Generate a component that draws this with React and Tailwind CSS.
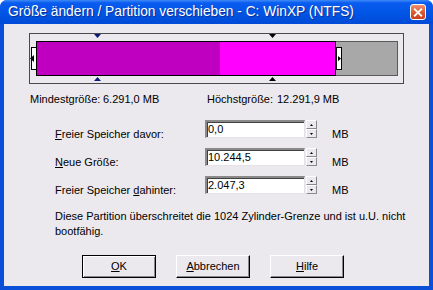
import React from "react";

function Tri({ dir, color, className }) {
  const pts = {
    down: "0,0 7,0 3.5,4",
    up: "0,4 7,4 3.5,0",
  };
  return (
    <svg width="7" height="4" viewBox="0 0 7 4" className={className}>
      <polygon points={pts[dir]} fill={color} />
    </svg>
  );
}

function Handle({ side, className }) {
  return (
    <div className={"absolute top-[13px] flex h-[23px] w-[6px] items-center border border-black bg-white " + className}>
      <svg width="4" height="7" viewBox="0 0 4 7" className={side === "left" ? "-ml-[2px]" : "ml-[1px]"}>
        {side === "left" ? <polygon points="4,0 4,7 0,3.5" fill="#000" /> : <polygon points="0,0 0,7 4,3.5" fill="#000" />}
      </svg>
    </div>
  );
}

function Spinner() {
  const btn = "flex h-[9px] w-[11px] items-center justify-center border border-t-white border-l-white border-b-[#8a8a8a] border-r-[#8a8a8a] bg-[#ECE9EE]";
  return (
    <div className="ml-[1px] flex flex-col">
      <div className={btn}>
        <svg width="3" height="2" viewBox="0 0 3 2"><polygon points="0,2 3,2 1.5,0" fill="#000" /></svg>
      </div>
      <div className={btn}>
        <svg width="3" height="2" viewBox="0 0 3 2"><polygon points="0,0 3,0 1.5,2" fill="#000" /></svg>
      </div>
    </div>
  );
}

function Field({ label, value }) {
  return (
    <div className="flex h-[18px] items-start">
      <div className="w-[150px] shrink-0 pt-[8px] leading-[13px]">{label}</div>
      <div className="h-[18px] w-[100px] shrink-0 border-t-2 border-l-2 border-b border-r border-t-[#8a8a8a] border-l-[#8a8a8a] border-b-[#e4e2e6] border-r-[#e4e2e6] bg-white pl-[1px] leading-[14px] shadow-[inset_1px_1px_0_#404040]">
        {value}
      </div>
      <Spinner />
      <div className="ml-[15px] pt-[8px] leading-[13px]">MB</div>
    </div>
  );
}

function Button({ children, isDefault }) {
  return (
    <div
      className={
        "flex h-[23px] w-[74px] items-center justify-center border bg-[#ECE9EE] leading-[13px] " +
        (isDefault
          ? "border-black shadow-[inset_1px_1px_0_#fff,inset_-1px_-1px_0_#8a8a8a]"
          : "border-t-white border-l-white border-b-black border-r-black shadow-[inset_-1px_-1px_0_#8a8a8a]")
      }
    >
      {children}
    </div>
  );
}

export default function App() {
  return (
    <div className="h-[290px] w-[433px] bg-white font-['Liberation_Sans',Arial,sans-serif] text-[11px] text-black">
      <div className="flex h-full flex-col overflow-hidden rounded-t-[7px] bg-[#0b4fd8]">
        <div className="flex h-[24px] shrink-0 items-start bg-[linear-gradient(to_bottom,#3d8af7_0%,#0a5cf0_12%,#0055e5_55%,#004ad6_100%)] pl-[8px] pr-[7px]">
          <div className="mt-[3px] flex-1 text-[13.75px] leading-[17px] text-white [text-shadow:1px_1px_0_#0c2f96]">
            Größe ändern / Partition verschieben - C: WinXP (NTFS)
          </div>
          <div className="mt-[4px] flex h-[16px] w-[16px] shrink-0 items-center justify-center rounded-[3px] border border-white bg-linear-to-b from-[#ee916f] via-[#dc5a32] to-[#c6401c]">
            <div className="relative h-[9px] w-[9px]">
              <div className="absolute left-[3.5px] top-[-1px] h-[11px] w-[2px] rotate-45 bg-white" />
              <div className="absolute left-[3.5px] top-[-1px] h-[11px] w-[2px] -rotate-45 bg-white" />
            </div>
          </div>
        </div>

        <div className="mx-[4px] mb-[4px] flex flex-1 flex-col bg-[#ECE9EE]">
          <div className="relative ml-[25px] mt-[9px] h-[51px] w-[375px] border border-[#4a4a4a]">
            <div className="ml-[6px] mt-[7px] flex h-[35px]">
              <div className="flex w-[300px] border border-black">
                <div className="w-[183px] bg-[#C000C0]" />
                <div className="flex-1 bg-[#FF00FF]" />
              </div>
              <div className="w-[62px] border border-l-0 border-[#5a5a5a] bg-[#A8A8A8]" />
            </div>
            <Tri dir="down" color="#0a1a7a" className="absolute left-[64px] top-0" />
            <Tri dir="up" color="#0a1a7a" className="absolute left-[64px] top-[43px]" />
            <Tri dir="down" color="#000" className="absolute left-[239px] top-0" />
            <Tri dir="up" color="#000" className="absolute left-[239px] top-[43px]" />
            <Handle side="left" className="left-[1px]" />
            <Handle side="right" className="left-[306px]" />
          </div>

          <div className="mt-[9px] flex pl-[26px] leading-[13px]">
            <span className="w-[73px]">Mindestgröße:</span>
            <span className="w-[104px]">6.291,0 MB</span>
            <span className="w-[70px]">Höchstgröße:</span>
            <span>12.291,9 MB</span>
          </div>

          <div className="mt-[14px] flex flex-col gap-[10px] pl-[51px]">
            <Field label={<><u>F</u>reier Speicher davor:</>} value="0,0" />
            <Field label={<><u>N</u>eue Größe:</>} value="10.244,5" />
            <Field label={<>Freier Speicher <u>d</u>ahinter:</>} value="2.047,3" />
          </div>

          <div className="mt-[15px] pl-[51px] leading-[15px]">
            Diese Partition überschreitet die 1024 Zylinder-Grenze und ist u.U. nicht
            <br />
            bootfähig.
          </div>

          <div className="mt-[16px] flex gap-[20px] pl-[78px]">
            <Button isDefault><u>O</u>K</Button>
            <Button><u>A</u>bbrechen</Button>
            <Button><u>H</u>ilfe</Button>
          </div>
        </div>
      </div>
    </div>
  );
}
